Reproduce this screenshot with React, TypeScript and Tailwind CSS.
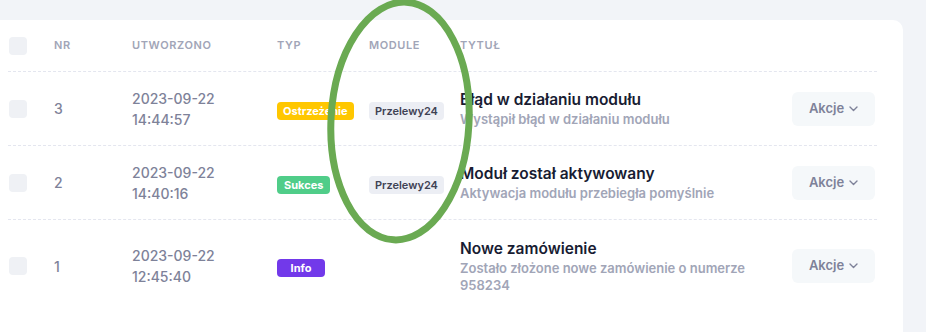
import React from "react";

const rows = [
  {
    nr: "3",
    date: "2023-09-22",
    time: "14:44:57",
    type: { label: "Ostrzeżenie", cls: "bg-[#ffc700] px-[6px]" },
    module: true,
    title: "Błąd w działaniu modułu",
    desc: "Wystąpił błąd w działaniu modułu",
    h: "h-[74px]",
  },
  {
    nr: "2",
    date: "2023-09-22",
    time: "14:40:16",
    type: { label: "Sukces", cls: "bg-[#50cd89] px-[7px]" },
    module: true,
    title: "Moduł został aktywowany",
    desc: "Aktywacja modułu przebiegła pomyślnie",
    h: "h-[74px]",
  },
  {
    nr: "1",
    date: "2023-09-22",
    time: "12:45:40",
    type: { label: "Info", cls: "bg-[#7239ea] w-[48px] justify-center" },
    module: false,
    title: "Nowe zamówienie",
    desc: "Zostało złożone nowe zamówienie o numerze 958234",
    h: "h-[92px]",
  },
];

function Check() {
  return <div className="w-[18px] h-[18px] rounded-[4px] bg-[#eff1f5]" />;
}

export default function App() {
  return (
    <div
      className="relative w-[926px] h-[332px] bg-[#f2f4f8] overflow-hidden"
      style={{ fontFamily: "Inter, 'Noto Sans', sans-serif" }}
    >
      <div className="absolute left-0 top-[20px] w-[903px] h-[312px] bg-white rounded-tr-[10px]" />
      <div className="relative pt-[20px] pl-[8px] w-[877px]">
        {/* header */}
        <div className="flex items-center h-[52px] border-b border-dashed border-[#e4e6ef] text-[11px] font-semibold text-[#a1a5b7] uppercase tracking-[0.6px]">
          <div className="w-[46px] pl-[1px]"><Check /></div>
          <div className="w-[78px]">NR</div>
          <div className="w-[145px]">Utworzono</div>
          <div className="w-[92px]">Typ</div>
          <div className="w-[91px]">Module</div>
          <div className="flex-1">Tytuł</div>
        </div>
        {rows.map((r, i) => (
          <div
            key={i}
            className={`flex items-center ${r.h} ${i < rows.length - 1 ? "border-b border-dashed border-[#e4e6ef]" : ""}`}
          >
            <div className="w-[46px] pl-[1px]"><Check /></div>
            <div className="w-[78px] text-[14px] font-medium text-[#7e8299]">{r.nr}</div>
            <div className="w-[145px] text-[14px] font-medium text-[#7e8299] leading-[21px]">
              <div>{r.date}</div>
              <div>{r.time}</div>
            </div>
            <div className="w-[92px]">
              <span className={`inline-flex items-center h-[18px] rounded-[4px] text-[11px] font-bold text-white ${r.type.cls}`}>
                {r.type.label}
              </span>
            </div>
            <div className="w-[91px]">
              {r.module && (
                <span className="inline-flex items-center h-[18px] px-[6px] rounded-[4px] text-[11px] font-semibold text-[#3f4254] bg-[#eceef4]">
                  Przelewy24
                </span>
              )}
            </div>
            <div className="flex-1 pr-[20px]">
              <div className="text-[15.5px] font-semibold text-[#181c32] leading-[22px]">{r.title}</div>
              <div className="text-[13px] font-semibold text-[#a1a5b7] leading-[17px] max-w-[300px]">{r.desc}</div>
            </div>
            <div className="mr-[2px] w-[83px] h-[34px] rounded-[6px] bg-[#f5f8fa] flex items-center justify-center gap-[5px] text-[13px] font-semibold text-[#7e8299]">
              Akcje
              <svg width="9" height="6" viewBox="0 0 9 6" fill="none">
                <path d="M1 1l3.5 3.5L8 1" stroke="#7e8299" strokeWidth="1.4" strokeLinecap="round" strokeLinejoin="round" />
              </svg>
            </div>
          </div>
        ))}
      </div>
      <svg className="absolute left-0 top-0 pointer-events-none" width="926" height="332">
        <ellipse cx="400" cy="121" rx="69" ry="119" fill="none" stroke="#6aaa52" strokeWidth="7" transform="rotate(3 400 121)" />
      </svg>
    </div>
  );
}
